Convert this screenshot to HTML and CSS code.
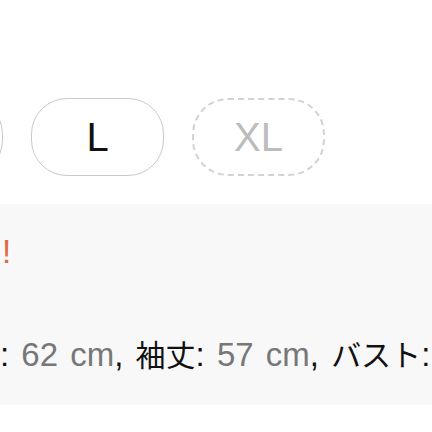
FILE: index.html
```html
<!DOCTYPE html>
<html lang="ja">
  <head>
    <meta charset="UTF-8" />
    <meta name="viewport" content="width=device-width, initial-scale=1.0" />
    <title>サイズ</title>
    <link rel="stylesheet" href="styles.css">
  </head>
  <body>
    <div class="size-row">
      <button class="size-btn" aria-label="M"></button>
      <button class="size-btn">L</button>
      <button class="size-btn sold-out">XL</button>
    </div>

    <section class="size-info">
      <p class="notice">!</p>
      <p class="measure">
        : <span class="val">62 cm</span>, <span class="lbl">袖丈</span>: <span class="val">57 cm</span>, <span class="lbl">バスト</span>:
      </p>
    </section>
  </body>
</html>
```

FILE: styles.css
```css
* {
  padding: 0;
  margin: 0;
  box-sizing: border-box;
}

body {
  font-family: "Liberation Sans", Arial, "Noto Sans CJK JP", sans-serif;
  background: #fff;
  color: #111;
  overflow: hidden;
}

.size-row {
  display: flex;
  gap: 28px;
  margin: 98px 0 0 -130px;
}

.size-btn {
  flex: none;
  width: 133px;
  height: 78px;
  display: flex;
  align-items: center;
  justify-content: center;
  font-family: inherit;
  font-size: 40px;
  line-height: 1;
  color: #111;
  background: #fff;
  border: 1.5px solid #c9c9c9;
  border-radius: 36px;
}

.size-btn.sold-out {
  color: #bcbcbc;
  border: 2px dashed #d2d2d2;
}

.size-info {
  margin-top: 28px;
  background: #f8f8f8;
  padding: 28px 0 30px 0;
  font-size: 33px;
  line-height: 40px;
  white-space: nowrap;
}

.notice {
  color: #de6a44;
  padding-left: 2px;
}

.measure {
  margin-top: 61px;
  word-spacing: 3px;
}

.val {
  color: #777;
}

.lbl {
  font-family: "Noto Sans CJK JP", sans-serif;
  font-size: 30px;
  color: #111;
}
```
